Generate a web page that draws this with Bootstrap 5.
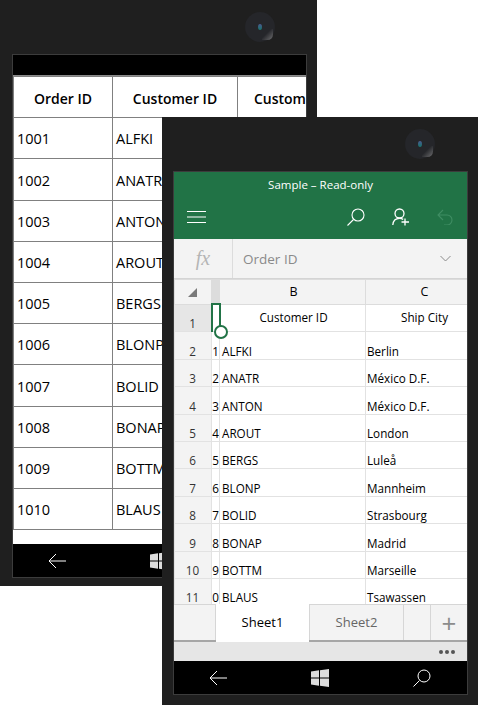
<!DOCTYPE html>
<html lang="en">
<head>
  <meta charset="UTF-8">
  <meta name="viewport" content="width=device-width, initial-scale=1.0">
  <title>Sample - Read-only</title>
  <link href="https://cdn.jsdelivr.net/npm/bootstrap@5.3.0/dist/css/bootstrap.min.css" rel="stylesheet">
  <style>
    html, body { height: 705px; overflow: hidden; }
    body { position: relative; background: #fff; font-family: "Open Sans", "Noto Sans", sans-serif; color: #000; }

    /* the two phones sit on a free canvas and overlap */
    .phone { position: absolute; background: #1f1f1f; }
    .phone-back { left: 0; top: 0; width: 317px; height: 586px; padding: 54px 10px 8px 12px; }
    .phone-front { left: 162px; top: 117px; width: 316px; height: 588px; padding: 54px 10px 10px 11px; }
    .camera { position: absolute; width: 30px; height: 30px; border-radius: 50%; background: #25262a; }
    .phone-back .camera { left: 245px; top: 12px; }
    .phone-front .camera { left: 243px; top: 12px; }
    .camera::before { content: ""; position: absolute; left: 13px; top: 12px; width: 4px; height: 6px; border-radius: 50%; background: linear-gradient(#4a5a90, #16756c); }
    .camera::after { content: ""; position: absolute; right: 2px; bottom: 2px; width: 11px; height: 11px; border-radius: 2px 0 50% 0; background: linear-gradient(135deg, #25262a 40%, #6e6e70); }
    .screen { height: 100%; border: 1px solid #3c3c3c; background: #fff; overflow: hidden; }

    /* back phone grid */
    .top-strip { height: 20px; background: #000; flex: none; }
    .back-grid-wrap { flex: 1; min-height: 0; overflow: hidden; border-top: 1px solid #8a8a8a; }
    .back-grid { table-layout: fixed; width: 324px; font-size: 14.5px; color: #000; --bs-table-color: #000; --bs-table-border-color: #808080; }
    .back-grid th, .back-grid td { height: 41.2px; padding: 2px 3px 0; vertical-align: middle; white-space: nowrap; overflow: hidden; border-width: 1px; }
    .back-grid th { text-align: center; font-weight: 600; font-size: 14px; }
    .back-grid tr > :first-child { width: 99px; }
    .back-grid tr > :nth-child(2) { width: 125px; }
    .nav-foot { height: 33px; flex: none; background: #000; padding-left: 35px; gap: 84px; }
    .nav-foot svg { flex: none; display: block; }

    /* front phone */
    .xl-head { height: 67px; background: #217346; color: #fff; flex: none; }
    .xl-title { font-size: 11.5px; text-align: center; padding-top: 4px; height: 27px; }
    .xl-tools { padding: 0 14px 0 13px; height: 36px; }
    .tool-gap { margin-left: 27px; }
    .formula-bar { height: 40px; background: #f3f3f3; border-bottom: 1px solid #d4d4d4; flex: none; }
    .fx-cell { width: 59px; border-right: 1px solid #dcdcdc; font: italic 20px "Liberation Serif", serif; color: #b5b5b5; }
    .formula-val { font-size: 13.5px; color: #8a8a8a; padding-left: 10px; padding-top: 1px; }
    .sheet-wrap { flex: 1; min-height: 0; overflow: hidden; position: relative; }
    .xl-grid { table-layout: fixed; width: 309px; font-size: 11.7px; border-collapse: collapse; }
    .xl-grid td, .xl-grid th { border: 1px solid #e2e2e2; white-space: nowrap; overflow: hidden; padding: 0; height: 27.4px; vertical-align: bottom; font-weight: 400; line-height: 15px; }
    .xl-grid .col-row { width: 37px; background: #f3f3f3; text-align: center; border-right: 0; color: #333; padding-right: 1px; }
    .xl-grid .col-thin { width: 8px; text-align: right; overflow: hidden; }
    .xl-grid .col-b { width: 146px; padding-left: 2px; }
    .xl-grid .col-c { padding-left: 1px; }
    .xl-grid .col-letters th { height: 25px; background: #f3f3f3; text-align: center; vertical-align: middle; line-height: 20px; font-size: 12.5px; border-color: #dcdcdc; }
    .xl-grid .col-letters th.col-thin { background: #dcdcdc; }
    .xl-grid .title-row td { vertical-align: middle; text-align: center; padding-bottom: 1px; }
    .xl-grid .title-row td.col-row { vertical-align: bottom; background: #e6e6e6; padding-bottom: 0; }
    .corner { width: 0; height: 0; border-left: 9px solid transparent; border-bottom: 9px solid #7a7a7a; margin: 0 auto; display: block; }
    .sel-box { position: absolute; left: 37px; top: 24px; width: 10px; height: 29px; border: 2px solid #217346; border-bottom: 0; pointer-events: none; }
    .sel-dot { position: absolute; left: 40px; top: 46px; width: 14px; height: 14px; border: 2px solid #217346; border-radius: 50%; background: #fff; }
    .tab-strip { height: 38px; flex: none; background: #f3f3f3; border-bottom: 2px solid #a6a6a6; font-size: 13px; margin-top: -1px; position: relative; }
    .tab-blank { width: 42px; border-right: 1px solid #d6d6d6; border-top: 1px solid #d6d6d6; }
    .tab-on { width: 93px; background: #fff; margin-bottom: -2px; font-weight: 500; }
    .tab-off { width: 95px; border: 1px solid #d6d6d6; border-bottom: 0; color: #666; }
    .tab-gap { width: 27px; border-right: 1px solid #d6d6d6; border-top: 1px solid #d6d6d6; }
    .tab-add { flex: 1; border-top: 1px solid #d6d6d6; color: #8c8c8c; font-size: 26px; font-weight: 400; line-height: 1; }
    .status-strip { height: 19px; flex: none; background: #e6e6e6; padding-right: 12px; gap: 2px; }
    .status-dot { width: 4px; height: 4px; border-radius: 50%; background: #555; }
  </style>
</head>
<body>

  <!-- back phone: plain data grid -->
  <div class="phone phone-back">
    <div class="camera"></div>
    <div class="screen d-flex flex-column">
      <div class="top-strip"></div>
      <div class="back-grid-wrap">
        <table class="table table-bordered back-grid mb-0">
          <thead>
            <tr><th>Order ID</th><th>Customer ID</th><th>Customer</th></tr>
          </thead>
          <tbody id="back-rows"></tbody>
        </table>
      </div>
      <div class="nav-foot d-flex align-items-center">
        <svg width="18" height="16" viewBox="0 0 18 16" fill="none" stroke="#fff" stroke-width="1"><path d="M18 8H1M8 1 1 8l7 7"/></svg>
        <svg width="18" height="18" viewBox="0 0 18 18" fill="#ddd"><path d="M0 2.500 8 1.300V8.400H0ZM9 1.200 18 0V8.400H9ZM0 9.500H8V16.700L0 15.500ZM9 9.500H18V18L9 16.800Z"/></svg>
      </div>
    </div>
  </div>

  <!-- front phone: spreadsheet -->
  <div class="phone phone-front">
    <div class="camera"></div>
    <div class="screen d-flex flex-column">
      <div class="xl-head">
        <div class="xl-title">Sample – Read-only</div>
        <div class="xl-tools d-flex align-items-center">
          <svg width="19" height="12" viewBox="0 0 19 12" stroke="#fff" stroke-width="1"><path d="M0 .5H19M0 6H19M0 11.5H19"/></svg>
          <svg class="ms-auto" width="18" height="18" viewBox="0 0 18 18" fill="none" stroke="#fff" stroke-width="1.1"><circle cx="11" cy="7" r="6"/><path d="M6.500 11.500 .5 17.500"/></svg>
          <svg class="tool-gap" width="18" height="18" viewBox="0 0 18 18" fill="none" stroke="#fff" stroke-width="1.3"><circle cx="7.500" cy="5.500" r="4.500"/><path d="M.8 17c.3-4 2.800-6.600 6.700-6.600 1.500 0 2.700.4 3.700 1M13 10.500v7M9.500 14h7.500"/></svg>
          <svg class="tool-gap" width="16" height="16" viewBox="0 0 16 16" fill="none" stroke="#3f8d63" stroke-width="1.1"><path d="M6 1 1 6l5 5M1 6h9a5 5 0 0 1 0 10H7"/></svg>
        </div>
      </div>

      <div class="formula-bar d-flex align-items-center">
        <div class="fx-cell h-100 d-flex align-items-center justify-content-center">fx</div>
        <div class="formula-val flex-grow-1">Order ID</div>
        <svg class="me-3" width="11" height="7" viewBox="0 0 11 7" fill="none" stroke="#8a8a8a"><path d="M.5 1 5.500 6l5-5"/></svg>
      </div>

      <div class="sheet-wrap">
        <table class="xl-grid">
          <thead>
            <tr class="col-letters">
              <th class="col-row"><span class="corner"></span></th>
              <th class="col-thin"></th>
              <th class="col-b">B</th>
              <th class="col-c">C</th>
            </tr>
          </thead>
          <tbody id="front-rows">
            <tr class="title-row">
              <td class="col-row">1</td>
              <td class="col-thin"></td>
              <td class="col-b">Customer ID</td>
              <td class="col-c">Ship City</td>
            </tr>
          </tbody>
        </table>
        <div class="sel-box"></div>
        <div class="sel-dot"></div>
      </div>

      <div class="tab-strip d-flex">
        <div class="tab-blank"></div>
        <div class="tab-on d-flex align-items-center justify-content-center">Sheet1</div>
        <div class="tab-off d-flex align-items-center justify-content-center">Sheet2</div>
        <div class="tab-gap"></div>
        <div class="tab-add d-flex align-items-center justify-content-center">+</div>
      </div>
      <div class="status-strip d-flex align-items-center justify-content-end">
        <span class="status-dot"></span><span class="status-dot"></span><span class="status-dot"></span>
      </div>
      <div class="nav-foot d-flex align-items-center">
        <svg width="18" height="16" viewBox="0 0 18 16" fill="none" stroke="#fff" stroke-width="1"><path d="M18 8H1M8 1 1 8l7 7"/></svg>
        <svg width="18" height="18" viewBox="0 0 18 18" fill="#ddd"><path d="M0 2.500 8 1.300V8.400H0ZM9 1.200 18 0V8.400H9ZM0 9.500H8V16.700L0 15.500ZM9 9.500H18V18L9 16.800Z"/></svg>
        <svg width="18" height="18" viewBox="0 0 18 18" fill="none" stroke="#fff" stroke-width="1"><circle cx="11" cy="7" r="6"/><path d="M6.500 11.500 .5 17.500"/></svg>
      </div>
    </div>
  </div>

  <script src="https://cdn.jsdelivr.net/npm/bootstrap@5.3.0/dist/js/bootstrap.bundle.min.js"></script>
  <script>
    // order rows shared by both grids
    const customers = ['ALFKI', 'ANATR', 'ANTON', 'AROUT', 'BERGS', 'BLONP', 'BOLID', 'BONAP', 'BOTTM', 'BLAUS'];
    const cities = ['Berlin', 'México D.F.', 'México D.F.', 'London', 'Luleå', 'Mannheim', 'Strasbourg', 'Madrid', 'Marseille', 'Tsawassen'];

    const backRows = document.getElementById('back-rows');
    const frontRows = document.getElementById('front-rows');
    customers.forEach(function (name, i) {
      backRows.insertAdjacentHTML('beforeend',
        `<tr><td>${1001 + i}</td><td>${name}</td><td></td></tr>`);
      frontRows.insertAdjacentHTML('beforeend',
        `<tr><td class="col-row">${i + 2}</td><td class="col-thin">${(i + 1) % 10}</td><td class="col-b">${name}</td><td class="col-c">${cities[i]}</td></tr>`);
    });
  </script>
</body>
</html>
